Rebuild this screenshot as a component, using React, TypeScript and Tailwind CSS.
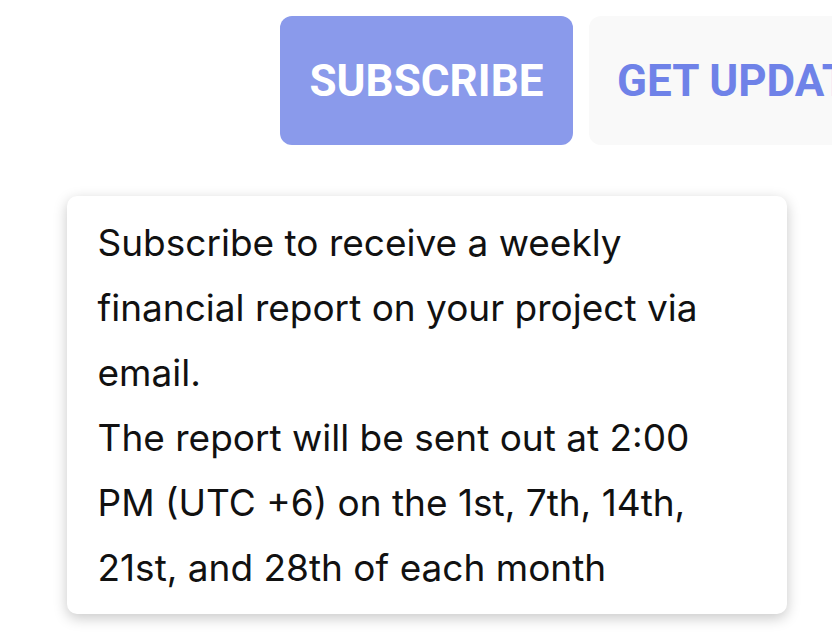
export default function App() {
  return (
    <div className="h-[644px] w-[832px] overflow-hidden bg-white">
      <div className="flex gap-4 pl-[280px] pt-4">
        {/* Subscribe button with its tooltip */}
        <div className="relative shrink-0">
          <button className="flex h-[129px] w-[293px] items-center justify-center rounded-xl bg-[#8a9aeb] font-['Roboto',sans-serif] text-[44px] font-bold text-white">
            SUBSCRIBE
          </button>
          <div className="absolute left-1/2 top-[180px] w-[720px] -translate-x-1/2 rounded-[10px] bg-white py-[14px] pl-[31px] pr-[34px] font-['Inter',sans-serif] text-[37px] leading-[65px] text-[#111] shadow-[0_4px_14px_rgba(0,0,0,0.22)]">
            <p>Subscribe to receive a weekly financial report on your project via email.</p>
            <p>The report will be sent out at 2:00 PM (UTC +6) on the 1st, 7th, 14th, 21st, and 28th of each month</p>
          </div>
        </div>
        <button className="flex h-[129px] w-[340px] shrink-0 items-center justify-start rounded-xl bg-[#f9f9f9] pl-[28px] font-['Roboto',sans-serif] text-[44px] font-bold text-[#6f82e8]">
          GET UPDATES
        </button>
      </div>
    </div>
  );
}
